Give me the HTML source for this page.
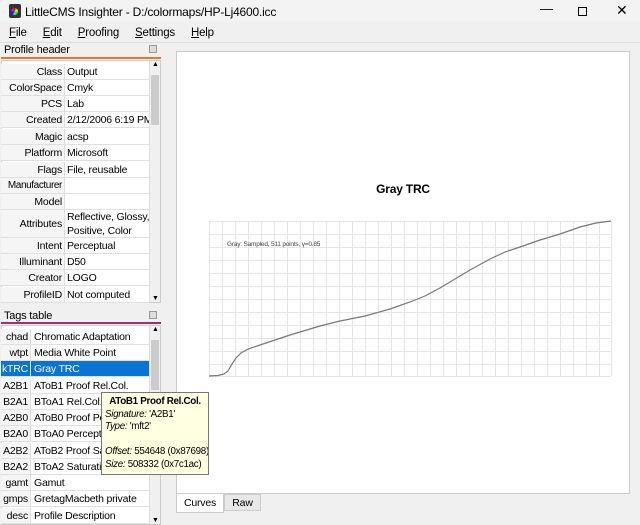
<!DOCTYPE html>
<html><head><style>
*{box-sizing:border-box;margin:0;padding:0}
body{width:640px;height:525px;overflow:hidden;background:#f0f0f0;font-family:"Liberation Sans",sans-serif;font-size:10.5px;letter-spacing:-0.2px;color:#000;position:relative}
.abs{position:absolute;white-space:nowrap}
.row{position:absolute;left:1px;width:148px;height:16px;border-bottom:1px solid #e0e0e0;background:#fff;overflow:hidden}
.row .l{position:absolute;left:0;width:64px;height:100%;text-align:right;padding-right:2px;line-height:16px;background:#f5f5f5;border-right:1px solid #ddd;white-space:nowrap}
.row .v{position:absolute;left:66px;line-height:16px;white-space:nowrap}
.t{position:absolute;left:1px;width:148px;height:16.3px;border-bottom:1px solid #e0e0e0;background:#fff;overflow:hidden}
.t .l{position:absolute;left:0;width:30px;height:100%;text-align:right;padding-right:2px;line-height:16px;background:#f5f5f5;border-right:1px solid #ddd}
.t .v{position:absolute;left:33px;line-height:16px;white-space:nowrap}
.sb{position:absolute;width:11px;background:#f0f0f0;border-left:1px solid #ddd}
</style></head><body>
<div class="abs" style="left:0;top:0;width:640px;height:22px;background:#f3f3f3"></div>
<div class="abs" style="left:9px;top:4px;width:12px;height:14px;background:#333;border-radius:2px"></div>
<div class="abs" style="left:11px;top:8px;width:7px;height:7px;background:conic-gradient(red,yellow,lime,cyan,blue,magenta,red);border-radius:50%"></div>
<div class="abs" style="left:25px;top:5px;font-size:12px">LittleCMS Insighter - D:/colormaps/HP-Lj4600.icc</div>
<div class="abs" style="left:540px;top:1px;font-size:13px">&#8212;</div>
<div class="abs" style="left:578px;top:7px;width:9px;height:9px;border:1px solid #000"></div>
<div class="abs" style="left:616px;top:2px;font-size:14px">✕</div>
<div class="abs" style="left:9px;top:27px;font-size:11.5px;word-spacing:5px"><u>F</u>ile &nbsp;<u>E</u>dit &nbsp;<u>P</u>roofing &nbsp;<u>S</u>ettings &nbsp;<u>H</u>elp</div>
<div class="abs" style="left:0;top:42px;width:640px;height:1px;background:#ddd"></div>
<div class="abs" style="left:4px;top:44px;font-size:11px">Profile header</div>
<div class="abs" style="left:149px;top:45px;width:8px;height:8px;border:1px solid #999;background:#ddd"></div>
<div class="abs" style="left:1px;top:57px;width:160px;height:2px;background:#f07030"></div>
<div class="abs" style="left:1px;top:60px;width:160px;height:243px;background:#fff;border:1px solid #ccc;overflow:hidden"></div>
<div class="row" style="top:64px"><span class="l">Class</span><span class="v">Output</span></div>
<div class="row" style="top:80px"><span class="l">ColorSpace</span><span class="v">Cmyk</span></div>
<div class="row" style="top:96px"><span class="l">PCS</span><span class="v">Lab</span></div>
<div class="row" style="top:112px"><span class="l">Created</span><span class="v">2/12/2006 6:19 PM</span></div>
<div class="row" style="top:129px"><span class="l">Magic</span><span class="v">acsp</span></div>
<div class="row" style="top:145px"><span class="l">Platform</span><span class="v">Microsoft</span></div>
<div class="row" style="top:162px"><span class="l">Flags</span><span class="v">File, reusable</span></div>
<div class="row" style="top:178px"><span class="l" style="font-size:10px;letter-spacing:-0.4px">Manufacturer</span><span class="v"></span></div>
<div class="row" style="top:194px"><span class="l">Model</span><span class="v"></span></div>
<div class="row" style="top:210px;height:28px"><span class="l" style="line-height:28px">Attributes</span><span class="v" style="line-height:14px">Reflective, Glossy,<br>Positive, Color</span></div>
<div class="row" style="top:238px"><span class="l">Intent</span><span class="v">Perceptual</span></div>
<div class="row" style="top:254px"><span class="l">Illuminant</span><span class="v">D50</span></div>
<div class="row" style="top:270px"><span class="l">Creator</span><span class="v">LOGO</span></div>
<div class="row" style="top:287px"><span class="l">ProfileID</span><span class="v">Not computed</span></div>
<div class="sb" style="left:149px;top:61px;height:241px"><div style="position:absolute;left:1px;top:14px;width:8px;height:50px;background:#ccc"></div><div style="position:absolute;top:0;left:2px;font-size:7px">▲</div><div style="position:absolute;bottom:0;left:2px;font-size:7px">▼</div></div>
<div class="abs" style="left:4px;top:310px;font-size:11px">Tags table</div>
<div class="abs" style="left:149px;top:311px;width:8px;height:8px;border:1px solid #999;background:#ddd"></div>
<div class="abs" style="left:1px;top:322px;width:160px;height:2px;background:#a0306a"></div>
<div class="abs" style="left:1px;top:325px;width:160px;height:200px;background:#fff;border:1px solid #ccc"></div>
<div class="t" style="top:329px"><span class="l">chad</span><span class="v">Chromatic Adaptation</span></div>
<div class="t" style="top:345px"><span class="l">wtpt</span><span class="v">Media White Point</span></div>
<div class="t" style="top:361px;background:#0a74d4;color:#fff"><span class="l" style="background:#0a74d4">kTRC</span><span class="v">Gray TRC</span></div>
<div class="t" style="top:378px"><span class="l">A2B1</span><span class="v">AToB1 Proof Rel.Col.</span></div>
<div class="t" style="top:394px"><span class="l">B2A1</span><span class="v">BToA1 Rel.Col.</span></div>
<div class="t" style="top:410px"><span class="l">A2B0</span><span class="v">AToB0 Proof Perceptual</span></div>
<div class="t" style="top:426px"><span class="l">B2A0</span><span class="v">BToA0 Perceptual</span></div>
<div class="t" style="top:443px"><span class="l">A2B2</span><span class="v">AToB2 Proof Saturation</span></div>
<div class="t" style="top:459px"><span class="l">B2A2</span><span class="v">BToA2 Saturation</span></div>
<div class="t" style="top:475px"><span class="l">gamt</span><span class="v">Gamut</span></div>
<div class="t" style="top:491px"><span class="l">gmps</span><span class="v">GretagMacbeth private</span></div>
<div class="t" style="top:508px"><span class="l">desc</span><span class="v">Profile Description</span></div>
<div class="sb" style="left:149px;top:326px;height:198px"><div style="position:absolute;left:1px;top:14px;width:8px;height:50px;background:#ccc"></div><div style="position:absolute;top:0;left:2px;font-size:7px">▲</div><div style="position:absolute;bottom:0;left:2px;font-size:7px">▼</div></div>
<div class="abs" style="left:176px;top:51px;width:454px;height:443px;background:#fff;border:1px solid #ccc"></div>
<div class="abs" style="left:176px;top:182px;width:454px;text-align:center;font-weight:bold;font-size:12px">Gray TRC</div>
<svg class="abs" style="left:0;top:0" width="640" height="525">
<g stroke="#e6e6e6" stroke-width="1">
<path d="M209.5 221V376M222.5 221V376M235.5 221V376M248.5 221V376M261.5 221V376M274.5 221V376M287.5 221V376M300.5 221V376M313.5 221V376M326.5 221V376M339.5 221V376M352.5 221V376M365.5 221V376M378.5 221V376M391.5 221V376M404.5 221V376M417.5 221V376M430.5 221V376M443.5 221V376M456.5 221V376M469.5 221V376M482.5 221V376M495.5 221V376M508.5 221V376M521.5 221V376M534.5 221V376M547.5 221V376M560.5 221V376M573.5 221V376M586.5 221V376M599.5 221V376M611.5 221V376"/>
<path d="M209 221.5H611M209 234.5H611M209 247.5H611M209 260.5H611M209 273.5H611M209 286.5H611M209 299.5H611M209 312.5H611M209 325.5H611M209 338.5H611M209 351.5H611M209 364.5H611M209 376.5H611"/>
</g>
<path d="M209 376L218 375.5L224 374L228 371L232 364L236 358L241 353L248 349L260 345L290 335L320 326L340 321L365 316L390 309L410 302L425 296L440 288L455 279L470 270L490 259L505 252L520 247L540 240L560 234L580 227L596 223L611 221" fill="none" stroke="#777" stroke-width="1.2"/>
<text x="227" y="246" font-size="6.5" fill="#444" font-family="Liberation Sans">Gray: Sampled, 511 points, γ=0.85</text>
</svg>
<div class="abs" style="left:101px;top:392px;width:108px;height:83px;background:#ffffe1;border:1px solid #777;padding:3px 3px;line-height:12.5px;font-size:9.8px;letter-spacing:-0.3px;overflow:hidden">
<div style="text-align:center;font-weight:bold">AToB1 Proof Rel.Col.</div>
<div><i>Signature:</i> 'A2B1'</div>
<div><i>Type:</i> 'mft2'</div>
<div>&nbsp;</div>
<div><i>Offset:</i> 554648 (0x87698)</div>
<div><i>Size:</i> 508332 (0x7c1ac)</div>
</div>
<div class="abs" style="left:176px;top:494px;width:48px;height:19px;background:#fff;border:1px solid #ccc;border-top:none;text-align:center;line-height:19px">Curves</div>
<div class="abs" style="left:224px;top:494px;width:37px;height:17px;background:#e8e8e8;border:1px solid #ccc;text-align:center;line-height:16px">Raw</div>
</body></html>
